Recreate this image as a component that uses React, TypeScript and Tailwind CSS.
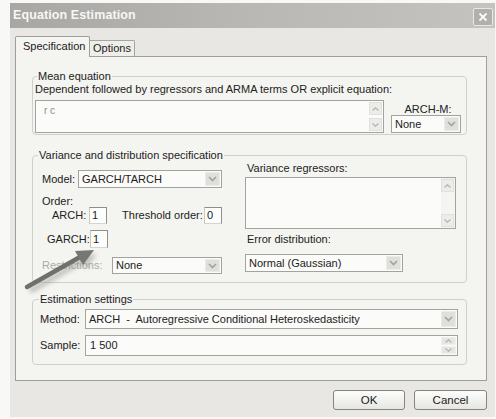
import React from "react";

const Chevron = () => (
  <svg width="9" height="6" viewBox="0 0 9 6">
    <polyline points="1,1 4.5,4.5 8,1" fill="none" stroke="#a3a39f" strokeWidth="1.7" />
  </svg>
);

const Caret = ({ up }: { up?: boolean }) => (
  <svg width="7" height="4" viewBox="0 0 7 4">
    <polyline
      points={up ? "0.5,3.5 3.5,0.8 6.5,3.5" : "0.5,0.5 3.5,3.2 6.5,0.5"}
      fill="none"
      stroke="#b3b3af"
      strokeWidth="1.2"
    />
  </svg>
);

function Select({ value, className }: { value: string; className: string }) {
  return (
    <div className={`flex items-stretch border border-[#a2a29e] bg-[#fbfbf9] ${className}`}>
      <span className="flex-1 flex items-center pl-[3px] whitespace-pre overflow-hidden">{value}</span>
      <span className="w-[15px] m-[1px] flex items-center justify-center bg-[#dfdfdb] border border-[#ebebe8]">
        <Chevron />
      </span>
    </div>
  );
}

function ScrollBtn({ up }: { up?: boolean }) {
  return (
    <span className="w-[13px] h-[13px] flex items-center justify-center bg-[#ececea] border border-[#e0e0dc]">
      <Caret up={up} />
    </span>
  );
}

function SmallInput({ value }: { value: string }) {
  return (
    <span className="w-[18px] h-full shrink-0 flex items-center pl-[2px] bg-[#fdfdfc] border border-[#8e8e8a] border-l-[#c8c8c4] border-b-[#d4d4d0]">
      {value}
    </span>
  );
}

export default function App() {
  return (
    <div className="relative w-[496px] h-[419px] overflow-hidden bg-[#f8f8f6] font-['Liberation_Sans',Arial,sans-serif] text-[11px] leading-[13px] text-[#222221]">
      <div className="ml-[10px] mt-[3px] w-[485px] h-[414px] bg-[#e8e7e3] flex flex-col">
        {/* title bar */}
        <div className="h-[25px] flex items-center justify-between bg-linear-to-r from-[#a8a7a3] via-[#b9b8b4] to-[#c4c3bf] pl-[3px] pr-[2px]">
          <span className="text-[12.5px] font-bold tracking-[0.1px] text-[#f7f7f5]">Equation Estimation</span>
          <span className="w-[20px] h-[18px] mt-[2px] flex items-center justify-center bg-[#b1b0ac] border border-[#e9e9e7] rounded-[2px]">
            <svg width="10" height="10" viewBox="0 0 10 10">
              <path d="M1.5 1.5 L8.5 8.5 M8.5 1.5 L1.5 8.5" stroke="#fbfbfb" strokeWidth="1.8" />
            </svg>
          </span>
        </div>

        {/* tabs */}
        <div className="mt-[8px] ml-[5px] h-[20px] flex items-end">
          <div className="relative z-10 w-[75px] h-[21px] -mb-[1px] flex items-center pl-[7px] pb-[2px] bg-[#f4f4f1] border border-b-0 border-[#9e9e9a] rounded-t-[2px]">
            Specification
          </div>
          <div className="w-[45px] h-[16px] flex items-center pl-[3px] bg-[#eeeeea] border border-l-0 border-b-0 border-[#a5a5a1] rounded-tr-[2px]">
            Options
          </div>
        </div>

        {/* panel */}
        <div className="ml-[5px] w-[472px] h-[325px] bg-[#f4f4f1] border border-[#9e9e9a] pt-[13px] pl-[16px] flex flex-col">
          {/* mean equation */}
          <fieldset className="w-[435px] h-[65px] border border-[#d0d0cb] rounded-[4px] pl-[2px]">
            <legend className="ml-[2px] px-[1px]">Mean equation</legend>
            <div>Dependent followed by regressors and ARMA terms OR explicit equation:</div>
            <div className="mt-[4px] flex items-end gap-[7px]">
              <div className="w-[349px] h-[33px] flex bg-[#fbfbf9] border border-[#a2a29e]">
                <span className="flex-1 pl-[8px] pt-[3px] text-[10px] text-[#8e8e8b] whitespace-pre">r c</span>
                <span className="flex flex-col justify-between py-[1px] pr-[1px]">
                  <ScrollBtn up />
                  <ScrollBtn />
                </span>
              </div>
              <div className="w-[70px] flex flex-col items-center">
                <span className="leading-[11px] h-[11px] pl-[4px]">ARCH-M:</span>
                <Select value="None" className="w-[70px] h-[18px]" />
              </div>
            </div>
          </fieldset>

          {/* variance */}
          <fieldset className="mt-[14px] w-[435px] h-[134px] border border-[#d0d0cb] rounded-[4px] pl-[9px]">
            <legend className="-ml-[4px] px-[1px]">Variance and distribution specification</legend>
            <div className="flex gap-[23px]">
              <div className="w-[180px] flex flex-col">
                <div className="mt-[8px] h-[18px] flex items-center">
                  <span className="w-[36px]">Model:</span>
                  <Select value="GARCH/TARCH" className="w-[144px] h-full" />
                </div>
                <div className="mt-[7px] h-[12px] flex items-center">Order:</div>
                <div className="h-[17px] flex items-center pl-[10px]">
                  <span className="w-[38px]">ARCH:</span>
                  <SmallInput value="1" />
                  <span className="ml-[15px] w-[84px] whitespace-nowrap">Threshold order:</span>
                  <SmallInput value="0" />
                </div>
                <div className="mt-[6px] h-[18px] flex items-center pl-[5px]">
                  <span className="w-[43px] whitespace-nowrap">GARCH:</span>
                  <SmallInput value="1" />
                </div>
                <div className="mt-[9px] h-[17px] flex items-center">
                  <span className="w-[70px] text-[#abaaa6]">Restrictions:</span>
                  <Select value="None" className="w-[110px] h-full" />
                </div>
              </div>
              <div className="w-[211px] flex flex-col">
                <span className="pl-[2px] leading-[12px]">Variance regressors:</span>
                <div className="mt-[3px] h-[52px] flex bg-[#fbfbf9] border border-[#a2a29e]">
                  <span className="flex-1" />
                  <span className="flex flex-col justify-between py-[1px] pr-[1px] bg-[#f4f4f2]">
                    <ScrollBtn up />
                    <ScrollBtn />
                  </span>
                </div>
                <span className="mt-[4px] pl-[2px] leading-[12px]">Error distribution:</span>
                <Select value="Normal (Gaussian)" className="mt-[9px] w-[158px] h-[18px]" />
              </div>
            </div>
          </fieldset>

          {/* estimation settings */}
          <fieldset className="mt-[10px] w-[435px] h-[72px] border border-[#d0d0cb] rounded-[4px] pl-[7px]">
            <legend className="-ml-[1px] px-[1px]">Estimation settings</legend>
            <div className="mt-[3px] h-[20px] flex items-center">
              <span className="w-[45px]">Method:</span>
              <Select
                value="ARCH  -  Autoregressive Conditional Heteroskedasticity"
                className="w-[373px] h-full"
              />
            </div>
            <div className="mt-[6px] h-[21px] flex items-center">
              <span className="w-[45px]">Sample:</span>
              <div className="w-[373px] h-full flex bg-[#fbfbf9] border border-[#a2a29e]">
                <span className="flex-1 flex items-center pl-[4px]">1 500</span>
                <span className="w-[15px] m-[1px] flex flex-col gap-[1px]">
                  <span className="flex-1 flex items-center justify-center bg-[#e6e6e2] border border-[#efefec]">
                    <Caret up />
                  </span>
                  <span className="flex-1 flex items-center justify-center bg-[#e6e6e2] border border-[#efefec]">
                    <Caret />
                  </span>
                </span>
              </div>
            </div>
          </fieldset>
        </div>

        {/* buttons */}
        <div className="mt-[9px] ml-[323px] flex gap-[9px]">
          <button className="w-[72px] h-[20px] rounded-[3px] border border-[#85857f] bg-linear-to-b from-[#fdfdfc] to-[#e6e6e2] text-[11.5px]">
            OK
          </button>
          <button className="w-[73px] h-[20px] rounded-[3px] border border-[#85857f] bg-linear-to-b from-[#fdfdfc] to-[#e6e6e2] text-[11.5px]">
            Cancel
          </button>
        </div>
      </div>

      {/* annotation arrow */}
      <svg className="absolute left-0 top-0 pointer-events-none" width="496" height="419" viewBox="0 0 496 419">
        <defs>
          <filter id="soft" x="-20%" y="-20%" width="140%" height="140%">
            <feGaussianBlur stdDeviation="2" />
          </filter>
        </defs>
        <g filter="url(#soft)" opacity="0.45">
          <line x1="30" y1="291" x2="84" y2="260" stroke="#8a8a86" strokeWidth="6" />
          <polygon points="97,254 86,269 78,255" fill="#8a8a86" />
        </g>
        <line x1="27" y1="287" x2="80" y2="257" stroke="#6f6f6c" strokeWidth="4.5" strokeLinecap="round" />
        <polygon points="94,250 83,265 75,251" fill="#767673" />
      </svg>
    </div>
  );
}
